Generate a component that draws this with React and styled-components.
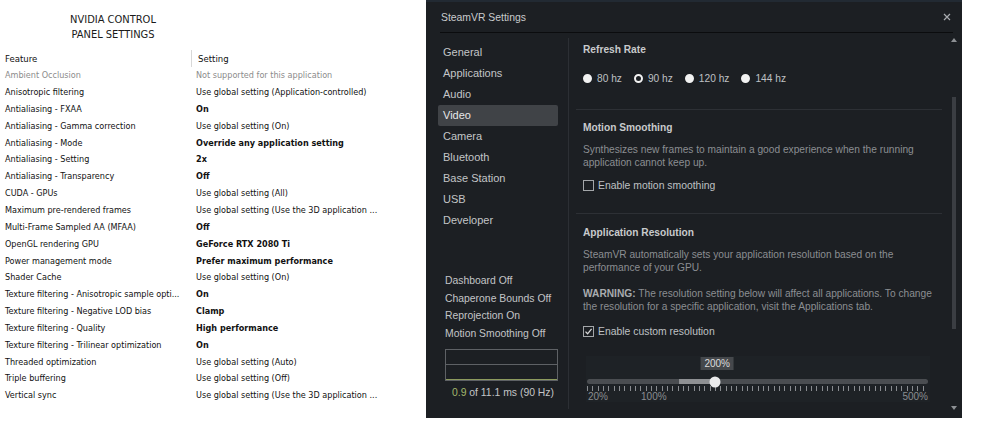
import React from "react";
import styled, { createGlobalStyle } from "styled-components";

const GlobalStyle = createGlobalStyle`
  html, body {
    margin: 0;
    padding: 0;
    background: #ffffff;
  }
`;

const nvidiaRows = [
  ["Ambient Occlusion", "Not supported for this application", "muted"],
  ["Anisotropic filtering", "Use global setting (Application-controlled)"],
  ["Antialiasing - FXAA", "On", "bold"],
  ["Antialiasing - Gamma correction", "Use global setting (On)"],
  ["Antialiasing - Mode", "Override any application setting", "bold"],
  ["Antialiasing - Setting", "2x", "bold"],
  ["Antialiasing - Transparency", "Off", "bold"],
  ["CUDA - GPUs", "Use global setting (All)"],
  ["Maximum pre-rendered frames", "Use global setting (Use the 3D application ..."],
  ["Multi-Frame Sampled AA (MFAA)", "Off", "bold"],
  ["OpenGL rendering GPU", "GeForce RTX 2080 Ti", "bold"],
  ["Power management mode", "Prefer maximum performance", "bold"],
  ["Shader Cache", "Use global setting (On)"],
  ["Texture filtering - Anisotropic sample opti...", "On", "bold"],
  ["Texture filtering - Negative LOD bias", "Clamp", "bold"],
  ["Texture filtering - Quality", "High performance", "bold"],
  ["Texture filtering - Trilinear optimization", "On", "bold"],
  ["Threaded optimization", "Use global setting (Auto)"],
  ["Triple buffering", "Use global setting (Off)"],
  ["Vertical sync", "Use global setting (Use the 3D application ..."],
];

const navItems = [
  "General",
  "Applications",
  "Audio",
  "Video",
  "Camera",
  "Bluetooth",
  "Base Station",
  "USB",
  "Developer",
];

const statusItems = [
  "Dashboard Off",
  "Chaperone Bounds Off",
  "Reprojection On",
  "Motion Smoothing Off",
];

const rates = [
  { label: "80 hz", selected: false },
  { label: "90 hz", selected: true },
  { label: "120 hz", selected: false },
  { label: "144 hz", selected: false },
];

const MIN = 20;
const MAX = 500;
const recommended = 150;
const current = 200;
const pct = (v) => ((v - MIN) / (MAX - MIN)) * 100;

function NvidiaPanel() {
  return (
    <NvPanel>
      <NvTitle>
        NVIDIA CONTROL
        <br />
        PANEL SETTINGS
      </NvTitle>
      <NvTable>
        <NvHead>Feature</NvHead>
        <NvHead $divider>Setting</NvHead>
        {nvidiaRows.map(([feature, setting, kind]) => (
          <React.Fragment key={feature}>
            <NvCell $muted={kind === "muted"}>{feature}</NvCell>
            <NvCell $muted={kind === "muted"} $bold={kind === "bold"}>
              {setting}
            </NvCell>
          </React.Fragment>
        ))}
      </NvTable>
    </NvPanel>
  );
}

function SteamVRSettings() {
  return (
    <Window>
      <Header>
        <HeaderTitle>SteamVR Settings</HeaderTitle>
        <CloseButton>
          <svg width="8" height="8" viewBox="0 0 8 8">
            <path d="M1 1L7 7M7 1L1 7" stroke="#a8abaf" strokeWidth="1.2" />
          </svg>
        </CloseButton>
      </Header>
      <Body>
        <Sidebar>
          <Nav>
            {navItems.map((item) => (
              <NavItem key={item} $active={item === "Video"}>
                {item}
              </NavItem>
            ))}
          </Nav>
          <Status>
            {statusItems.map((s) => (
              <StatusLine key={s}>{s}</StatusLine>
            ))}
            <Graph>
              <GraphRow />
              <GraphRow $last />
            </Graph>
            <Timing>
              <Green>0.9</Green> of 11.1 ms (90 Hz)
            </Timing>
          </Status>
        </Sidebar>
        <VDivider />
        <Content>
          <Scroll>
            <Section $pt={10} $pb={24}>
              <SectionTitle>Refresh Rate</SectionTitle>
              <RadioRow>
                {rates.map((r) => (
                  <RadioItem key={r.label}>
                    <RadioDot $selected={r.selected} />
                    {r.label}
                  </RadioItem>
                ))}
              </RadioRow>
            </Section>
            <Section $pt={11} $pb={21}>
              <SectionTitle>Motion Smoothing</SectionTitle>
              <Desc $mt={7.5}>
                Synthesizes new frames to maintain a good experience when the running
                application cannot keep up.
              </Desc>
              <CheckRow $mt={9.5}>
                <CheckBox />
                Enable motion smoothing
              </CheckRow>
            </Section>
            <Section $pt={12} $pb={0} $last>
              <SectionTitle>Application Resolution</SectionTitle>
              <Desc $mt={7.5}>
                SteamVR automatically sets your application resolution based on the
                performance of your GPU.
              </Desc>
              <Desc $mt={13}>
                <strong>WARNING:</strong> The resolution setting below will affect all
                applications. To change the resolution for a specific application, visit
                the Applications tab.
              </Desc>
              <CheckRow $mt={11.5}>
                <CheckBox>
                  <svg width="9" height="9" viewBox="0 0 9 9">
                    <path
                      d="M1.5 4.6L3.6 6.8L7.6 1.8"
                      stroke="#d8d8d8"
                      strokeWidth="1.3"
                      fill="none"
                    />
                  </svg>
                </CheckBox>
                Enable custom resolution
              </CheckRow>
              <SliderBox>
                <Track>
                  <TrackFill
                    style={{
                      left: pct(recommended) + "%",
                      width: pct(current) - pct(recommended) + "%",
                    }}
                  />
                  <Bubble style={{ left: pct(current) + "%" }}>{current}%</Bubble>
                  <Thumb style={{ left: pct(current) + "%" }} />
                </Track>
                <Ticks />
                <Labels>
                  <span>20%</span>
                  <LabelMid>100%</LabelMid>
                  <LabelEnd>500%</LabelEnd>
                </Labels>
              </SliderBox>
            </Section>
          </Scroll>
          <ScrollBar>
            <ArrowUp />
            <ScrollThumb />
            <ArrowDown />
          </ScrollBar>
        </Content>
      </Body>
    </Window>
  );
}

export default function App() {
  return (
    <>
      <GlobalStyle />
      <Page>
        <NvidiaPanel />
        <SteamVRSettings />
      </Page>
    </>
  );
}

const Page = styled.div`
  display: flex;
  align-items: flex-start;
  width: 1000px;
  height: 425px;
  background: #ffffff;
`;

/* NVIDIA side */

const NvPanel = styled.div`
  width: 426px;
  padding-top: 12px;
  font-family: "DejaVu Sans Condensed", "Liberation Sans", Arial, sans-serif;
  color: #111;
`;

const NvTitle = styled.div`
  width: 226px;
  text-align: center;
  font-size: 11px;
  line-height: 15px;
  color: #1a1a1a;
`;

const NvTable = styled.div`
  display: grid;
  grid-template-columns: 191px 1fr;
  grid-auto-rows: 16.85px;
  margin-top: 8px;
`;

const NvHead = styled.div`
  display: flex;
  align-items: center;
  font-size: 9.5px;
  padding-left: ${(p) => (p.$divider ? "6px" : "5px")};
  border-left: ${(p) => (p.$divider ? "1px solid #d8d8d8" : "none")};
  color: #111;
`;

const NvCell = styled.div`
  display: flex;
  align-items: center;
  white-space: nowrap;
  font-size: 9px;
  padding-left: 5px;
  font-weight: ${(p) => (p.$bold ? 700 : 400)};
  color: ${(p) => (p.$muted ? "#8c8c8c" : "#111")};
`;

/* SteamVR side */

const Window = styled.div`
  width: 536px;
  height: 418px;
  background: #1c1f23;
  border-top: 2px solid #222a33;
  box-sizing: border-box;
  display: flex;
  flex-direction: column;
  font-family: "Liberation Sans", Arial, sans-serif;
  color: #c4c6c8;
`;

const Header = styled.div`
  height: 30px;
  margin: 0 9px 0 14px;
  border-bottom: 1px solid #0b0c0e;
  display: flex;
  align-items: center;
  justify-content: space-between;
`;

const HeaderTitle = styled.div`
  font-size: 10.4px;
  color: #c9cbcd;
  padding-left: 1px;
`;

const CloseButton = styled.div`
  display: flex;
  align-items: center;
  padding-right: 2px;
`;

const Body = styled.div`
  flex: 1;
  display: flex;
  min-height: 0;
`;

const Sidebar = styled.div`
  width: 142px;
  display: flex;
  flex-direction: column;
  padding-bottom: 18px;
  box-sizing: border-box;
`;

const Nav = styled.div`
  padding: 9px 0 0 12px;
  display: flex;
  flex-direction: column;
`;

const NavItem = styled.div`
  width: 120px;
  height: 21px;
  line-height: 21px;
  padding-left: 5px;
  box-sizing: border-box;
  font-size: 11px;
  border-radius: 2px;
  color: ${(p) => (p.$active ? "#e6e7e8" : "#c3c5c7")};
  background: ${(p) => (p.$active ? "#404347" : "transparent")};
`;

const Status = styled.div`
  margin-top: auto;
  padding-left: 19px;
`;

const StatusLine = styled.div`
  font-size: 10.4px;
  line-height: 17.5px;
  color: #c3c5c7;
`;

const Graph = styled.div`
  width: 113px;
  height: 32px;
  margin-top: 7px;
  box-sizing: border-box;
  border: 1px solid #5e6165;
  display: flex;
  flex-direction: column;
`;

const GraphRow = styled.div`
  flex: 1;
  border-top: ${(p) => (p.$last ? "1px solid #5e6165" : "none")};
  border-bottom: ${(p) => (p.$last ? "1px solid #8c9a5e" : "none")};
`;

const Timing = styled.div`
  width: 116px;
  text-align: center;
  margin-top: 5px;
  font-size: 10.4px;
  line-height: 14px;
  color: #c3c5c7;
`;

const Green = styled.span`
  color: #a2b86c;
`;

const VDivider = styled.div`
  width: 1px;
  margin: 5px 0 9px;
  background: #2c2f34;
`;

const Content = styled.div`
  flex: 1;
  display: flex;
`;

const Scroll = styled.div`
  width: 376px;
  padding: 0 3px 0 7px;
  box-sizing: border-box;
`;

const Section = styled.div`
  padding: ${(p) => p.$pt}px 0 ${(p) => p.$pb}px 7px;
  border-bottom: ${(p) => (p.$last ? "none" : "1px solid #2d3035")};
`;

const SectionTitle = styled.div`
  font-size: 10.2px;
  font-weight: 700;
  line-height: 14px;
  color: #c8cacc;
`;

const RadioRow = styled.div`
  display: flex;
  gap: 12px;
  margin-top: 14px;
  height: 14px;
  align-items: center;
`;

const RadioItem = styled.div`
  display: flex;
  align-items: center;
  gap: 5px;
  font-size: 10.2px;
  color: #bfc1c3;
`;

const RadioDot = styled.span`
  width: 9px;
  height: 9px;
  border-radius: 50%;
  box-sizing: border-box;
  background: ${(p) => (p.$selected ? "#1c1f23" : "#f2f2f2")};
  border: 2px solid #f2f2f2;
`;

const Desc = styled.div`
  margin-top: ${(p) => p.$mt}px;
  font-size: 10.2px;
  line-height: 13px;
  color: #8b8e92;

  strong {
    color: #a9acaf;
    font-weight: 700;
  }
`;

const CheckRow = styled.div`
  display: flex;
  align-items: center;
  gap: 4px;
  height: 14px;
  margin-top: ${(p) => p.$mt}px;
  font-size: 10.4px;
  color: #bfc1c3;
`;

const CheckBox = styled.span`
  width: 11px;
  height: 11px;
  box-sizing: border-box;
  border: 1px solid #a3a6a9;
  display: flex;
  align-items: center;
  justify-content: center;
`;

const SliderBox = styled.div`
  margin: 18px 0 0 3px;
  width: 344px;
  height: 46px;
  padding: 23px 2px 0 1px;
  box-sizing: border-box;
  background: #1e2226;
`;

const Track = styled.div`
  position: relative;
  height: 5px;
  border-radius: 3px;
  background: #4a4d51;
`;

const TrackFill = styled.div`
  position: absolute;
  top: 0;
  bottom: 0;
  background: #8e9093;
`;

const Thumb = styled.div`
  position: absolute;
  top: 50%;
  width: 11px;
  height: 11px;
  border-radius: 50%;
  background: #e9eaeb;
  transform: translate(-50%, -50%);
`;

const Bubble = styled.div`
  position: absolute;
  top: -22px;
  transform: translateX(-43%);
  padding: 0 4px;
  height: 13px;
  line-height: 13px;
  font-size: 10px;
  color: #dcdcdc;
  background: #45484c;
`;

const Ticks = styled.div`
  margin-top: 2px;
  height: 5px;
  background: repeating-linear-gradient(
    to right,
    #8a8d91 0 1px,
    transparent 1px 5.33px
  );
`;

const Labels = styled.div`
  display: flex;
  margin-top: 1px;
  font-size: 10px;
  line-height: 10px;
  color: #8a8d91;
  padding-left: 1px;
`;

const LabelMid = styled.span`
  margin-left: 33px;
`;

const LabelEnd = styled.span`
  margin-left: auto;
`;

const ScrollBar = styled.div`
  width: 17px;
  display: flex;
  flex-direction: column;
  align-items: center;
  padding: 5px 0 8px;
  box-sizing: border-box;
`;

const ArrowUp = styled.div`
  width: 0;
  height: 0;
  border-left: 3px solid transparent;
  border-right: 3px solid transparent;
  border-bottom: 4px solid #8d9094;
`;

const ScrollThumb = styled.div`
  width: 4px;
  height: 232px;
  margin-top: 55px;
  background: #3b3e43;
`;

const ArrowDown = styled.div`
  margin-top: auto;
  width: 0;
  height: 0;
  border-left: 3px solid transparent;
  border-right: 3px solid transparent;
  border-top: 4px solid #8d9094;
`;
